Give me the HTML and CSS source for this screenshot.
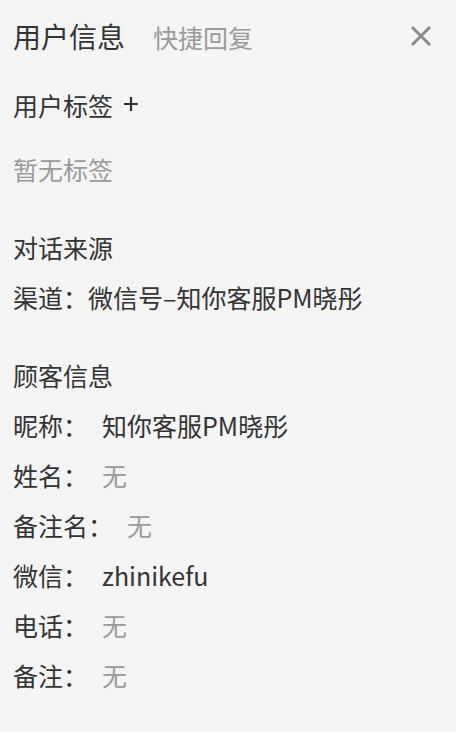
FILE: index.html
```html
<!DOCTYPE html>
<html lang="zh-CN">
<head>
<meta charset="utf-8">
<title>用户信息</title>
<link rel="stylesheet" href="styles.css">
</head>
<body>
<div class="panel">
  <div class="header">
    <div class="tabs">
      <span class="tab active">用户信息</span>
      <span class="tab">快捷回复</span>
    </div>
    <button class="close" aria-label="关闭">
      <svg width="22" height="22" viewBox="0 0 22 22"><path d="M2 2 L20 20 M20 2 L2 20" stroke="#8c8c8c" stroke-width="3" stroke-linecap="butt" fill="none"/></svg>
    </button>
  </div>

  <div class="row section-tags">用户标签<svg class="plus" width="16" height="16" viewBox="0 0 16 16"><path d="M8 1 V15 M1 8 H15" stroke="#333" stroke-width="2.2" fill="none"/></svg></div>
  <div class="row muted empty-tags">暂无标签</div>

  <div class="row section">对话来源</div>
  <div class="row">渠道：微信号–知你客服PM晓彤</div>

  <div class="row section">顾客信息</div>
  <div class="row field"><span class="label">昵称：</span><span class="value">知你客服PM晓彤</span></div>
  <div class="row field"><span class="label">姓名：</span><span class="value muted">无</span></div>
  <div class="row field"><span class="label">备注名：</span><span class="value muted">无</span></div>
  <div class="row field"><span class="label">微信：</span><span class="value">zhinikefu</span></div>
  <div class="row field"><span class="label">电话：</span><span class="value muted">无</span></div>
  <div class="row field"><span class="label">备注：</span><span class="value muted">无</span></div>
</div>
</body>
</html>
```

FILE: styles.css
```css
html, body {
  margin: 0;
  padding: 0;
  background: #f4f4f4;
}
body {
  font-family: "Noto Sans CJK SC", "Noto Sans", sans-serif;
  color: #333333;
}
.panel {
  padding: 0 0 0 13px;
}
.header {
  height: 72px;
  display: flex;
  align-items: center;
  justify-content: space-between;
  padding-right: 24px;
}
.tabs {
  display: flex;
  align-items: baseline;
}
.tab {
  font-size: 25px;
  color: #9a9a9a;
}
.tab.active {
  font-size: 28px;
  color: #333333;
  margin-right: 28px;
}
.close {
  border: 0;
  background: none;
  padding: 0;
  width: 22px;
  height: 22px;
  display: flex;
  cursor: pointer;
}
.row {
  font-size: 25px;
  line-height: 50px;
  height: 50px;
  white-space: nowrap;
}
.muted {
  color: #9a9a9a;
}
.section-tags {
  margin-top: 8px;
  display: flex;
  align-items: center;
}
.plus {
  margin-left: 10px;
  margin-top: -2px;
}
.empty-tags {
  margin-top: 14px;
}
.section {
  margin-top: 28px;
}
.field {
  display: flex;
}
.value {
  margin-left: 14px;
}
```
